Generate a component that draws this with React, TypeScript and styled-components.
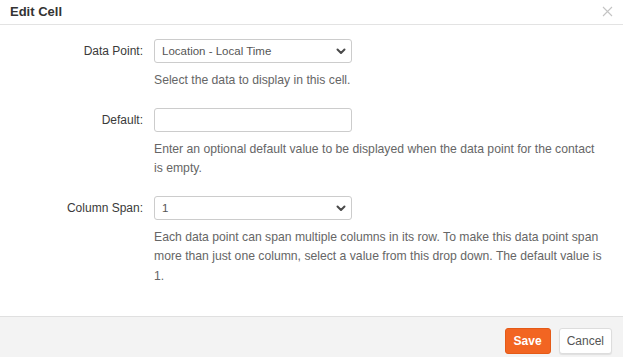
import React from 'react'
import styled, { createGlobalStyle } from 'styled-components'

const GlobalStyle = createGlobalStyle`
  html, body {
    margin: 0;
    padding: 0;
    background: #ffffff;
    overflow: hidden;
  }
  body {
    font-family: 'Liberation Sans', Arial, sans-serif;
    color: #333333;
  }
`

interface fieldTypes {
  label: string
  help: string
  children: React.ReactNode
}

const Chevron: React.FC = () => (
  <StyledChevron width='10' height='7' viewBox='0 0 10 7'>
    <path d='M1.5 1.5 L5 5 L8.5 1.5' fill='none' stroke='#4a4a4a' strokeWidth='2' strokeLinecap='round' strokeLinejoin='round' />
  </StyledChevron>
)

const Field: React.FC<fieldTypes> = ({ label, help, children }) => (
  <StyledRow>
    <StyledLabel>{label}</StyledLabel>
    <StyledControl>
      {children}
      <StyledHelp>{help}</StyledHelp>
    </StyledControl>
  </StyledRow>
)

const App: React.FC = () => {
  return (
    <>
      <GlobalStyle />
      <StyledModal>
        <StyledHeader>
          <StyledTitle>Edit Cell</StyledTitle>
          <StyledClose aria-label='close'>
            <svg width='11' height='11' viewBox='0 0 11 11'>
              <path d='M1 1 L10 10 M10 1 L1 10' stroke='#c4c4c4' strokeWidth='1.1' />
            </svg>
          </StyledClose>
        </StyledHeader>
        <StyledBody>
          <Field label='Data Point:' help='Select the data to display in this cell.'>
            <StyledSelectWrap>
              <StyledSelect defaultValue='local-time'>
                <option value='local-time'>Location - Local Time</option>
              </StyledSelect>
              <Chevron />
            </StyledSelectWrap>
          </Field>
          <Field
            label='Default:'
            help={'Enter an optional default value to be displayed when the data point for the contact is\u00a0empty.'}
          >
            <StyledInput type='text' />
          </Field>
          <Field
            label='Column Span:'
            help='Each data point can span multiple columns in its row. To make this data point span more than just one column, select a value from this drop down. The default value is 1.'
          >
            <StyledSelectWrap>
              <StyledSelect defaultValue='1'>
                <option value='1'>1</option>
                <option value='2'>2</option>
                <option value='3'>3</option>
              </StyledSelect>
              <Chevron />
            </StyledSelectWrap>
          </Field>
        </StyledBody>
        <StyledFooter>
          <StyledButton primary>Save</StyledButton>
          <StyledButton>Cancel</StyledButton>
        </StyledFooter>
      </StyledModal>
    </>
  )
}

export default App

const StyledModal = styled.div`
  width: 623px;
  height: 357px;
  display: flex;
  flex-direction: column;
  overflow: hidden;
  background: #ffffff;
`

const StyledHeader = styled.div`
  height: 25px;
  box-sizing: border-box;
  display: flex;
  align-items: center;
  justify-content: space-between;
  padding: 0 10px 2px 10px;
  border-bottom: 1px solid #e3e3e3;
`

const StyledTitle = styled.h4`
  margin: 0;
  font-size: 13px;
  font-weight: 700;
  color: #333333;
`

const StyledClose = styled.button`
  border: 0;
  background: transparent;
  padding: 0;
  display: flex;
  cursor: pointer;
`

const StyledBody = styled.div`
  flex: 1;
  display: flex;
  flex-direction: column;
  gap: 17px;
  padding: 14px 11px 0 0;
`

const StyledRow = styled.div`
  display: grid;
  grid-template-columns: 143px 1fr;
  column-gap: 11px;
  font-size: 12px;
`

const StyledLabel = styled.label`
  text-align: right;
  line-height: 24px;
  color: #3a3a3a;
  font-size: 12px;
`

const StyledControl = styled.div`
  display: flex;
  flex-direction: column;
  align-items: flex-start;
`

const StyledHelp = styled.p`
  margin: 8px 0 0 0;
  line-height: 19.5px;
  color: #666666;
  font-size: 12.2px;
`

const StyledSelectWrap = styled.div`
  position: relative;
  width: 198px;
`

const StyledSelect = styled.select`
  appearance: none;
  width: 100%;
  height: 24px;
  box-sizing: border-box;
  border: 1px solid #cccccc;
  border-radius: 3px;
  background: #ffffff;
  padding: 0 22px 0 7px;
  font-family: inherit;
  font-size: 11.5px;
  color: #555555;
`

const StyledChevron = styled.svg`
  position: absolute;
  right: 6px;
  top: 9px;
  pointer-events: none;
`

const StyledInput = styled.input`
  width: 198px;
  height: 24px;
  box-sizing: border-box;
  border: 1px solid #cccccc;
  border-radius: 3px;
  padding: 0 7px;
  font-family: inherit;
  font-size: 11.5px;
`

const StyledFooter = styled.div`
  flex-shrink: 0;
  height: 41px;
  box-sizing: border-box;
  display: flex;
  justify-content: flex-end;
  align-items: flex-start;
  gap: 8px;
  padding: 11px 11px 0 0;
  background: #f3f3f3;
  border-top: 1px solid #e0e0e0;
`

const StyledButton = styled.button<{ primary?: boolean }>`
  height: 26px;
  box-sizing: border-box;
  padding: 0 ${(p) => (p.primary ? '8px' : '7px')};
  border-radius: 3px;
  font-family: inherit;
  font-size: 12px;
  font-weight: ${(p) => (p.primary ? 700 : 400)};
  color: ${(p) => (p.primary ? '#ffffff' : '#555555')};
  background: ${(p) => (p.primary ? '#f26522' : '#ffffff')};
  border: 1px solid ${(p) => (p.primary ? '#e45a17' : '#dddddd')};
  box-shadow: ${(p) => (p.primary ? 'none' : '0 1px 1px rgba(0, 0, 0, 0.08)')};
  cursor: pointer;
`
